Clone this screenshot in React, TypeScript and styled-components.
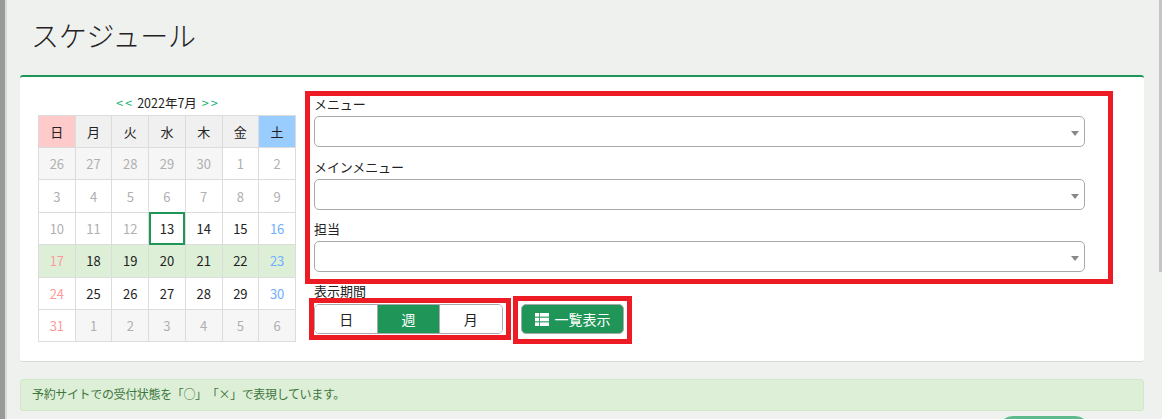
import styled, { createGlobalStyle } from "styled-components";

const weekDays = ["日", "月", "火", "水", "木", "金", "土"];

type Tone = "other" | "sun" | "sat" | "past" | "normal";

const weeks: number[][] = [
  [26, 27, 28, 29, 30, 1, 2],
  [3, 4, 5, 6, 7, 8, 9],
  [10, 11, 12, 13, 14, 15, 16],
  [17, 18, 19, 20, 21, 22, 23],
  [24, 25, 26, 27, 28, 29, 30],
  [31, 1, 2, 3, 4, 5, 6],
];

const toneOf = (row: number, col: number): Tone => {
  if ((row === 0 && col < 5) || (row === 5 && col > 0)) return "other";
  if (row === 0 || row === 1 || (row === 2 && col < 3)) return "past";
  if (col === 0) return "sun";
  if (col === 6) return "sat";
  return "normal";
};

const toneColor: Record<Tone, string> = {
  other: "#b0b0b0",
  past: "#b0b0b0",
  sun: "#ff9a9a",
  sat: "#70aeff",
  normal: "#222222",
};

const selects = ["メニュー", "メインメニュー", "担当"];

export default function App() {
  return (
    <>
      <GlobalStyle />
      <Page>
        <EdgeStrip />
        <Main>
          <Title>スケジュール</Title>
          <Card>
            <CalendarColumn>
              <MonthNav>
                <NavLink>&lt;&lt;</NavLink>
                <span>2022年7月</span>
                <NavLink>&gt;&gt;</NavLink>
              </MonthNav>
              <CalendarTable>
                <thead>
                  <tr>
                    {weekDays.map((day, index) => (
                      <HeadCell key={day} $index={index}>
                        {day}
                      </HeadCell>
                    ))}
                  </tr>
                </thead>
                <tbody>
                  {weeks.map((week, row) => (
                    <tr key={row}>
                      {week.map((date, col) => {
                        const tone = toneOf(row, col);
                        return (
                          <DayCell
                            key={col}
                            $tone={tone}
                            $inWeek={row === 3}
                            $today={row === 2 && col === 3}
                          >
                            {date}
                          </DayCell>
                        );
                      })}
                    </tr>
                  ))}
                </tbody>
              </CalendarTable>
            </CalendarColumn>
            <FormColumn>
              <FilterBox>
                {selects.map((label) => (
                  <Field key={label}>
                    <FieldLabel>{label}</FieldLabel>
                    <SelectBox>
                      <Caret />
                    </SelectBox>
                  </Field>
                ))}
              </FilterBox>
              <ActionRow>
                <PeriodColumn>
                  <PeriodLabel>表示期間</PeriodLabel>
                  <PeriodBox>
                    <Segment>
                      <SegmentItem>日</SegmentItem>
                      <SegmentItem $active>週</SegmentItem>
                      <SegmentItem>月</SegmentItem>
                    </Segment>
                  </PeriodBox>
                </PeriodColumn>
                <ListBox>
                  <ListButton>
                    <svg width="14" height="13" viewBox="0 0 14 13" fill="#fff">
                      <rect x="0" y="0" width="4.2" height="3.6" />
                      <rect x="5" y="0" width="9" height="3.6" />
                      <rect x="0" y="4.7" width="4.2" height="3.6" />
                      <rect x="5" y="4.7" width="9" height="3.6" />
                      <rect x="0" y="9.4" width="4.2" height="3.6" />
                      <rect x="5" y="9.4" width="9" height="3.6" />
                    </svg>
                    一覧表示
                  </ListButton>
                </ListBox>
              </ActionRow>
            </FormColumn>
          </Card>
          <Notice>予約サイトでの受付状態を「○」「×」で表現しています。</Notice>
          <PillRow>
            <Pill />
          </PillRow>
        </Main>
        <ScrollStrip />
      </Page>
    </>
  );
}

const GlobalStyle = createGlobalStyle`
  html, body {
    margin: 0;
    height: 419px;
    overflow: hidden;
    background: #eff1ef;
  }
  body {
    font-family: "Noto Sans CJK JP", "Noto Sans", sans-serif;
    font-size: 13px;
    color: #222;
  }
`;

const Page = styled.div`
  display: flex;
  height: 419px;
  overflow: hidden;
`;

const EdgeStrip = styled.div`
  width: 5px;
  flex: none;
  background: #999;
  border-right: 2px solid #dcdcdc;
`;

const Main = styled.main`
  flex: 1;
  min-width: 0;
  padding-left: 13px;
  padding-right: 15px;
`;

const ScrollStrip = styled.div`
  width: 3px;
  height: 272px;
  flex: none;
  background: #c4c4c4;
`;

const Title = styled.h1`
  margin: 0;
  height: 75px;
  padding: 13px 0 0 11px;
  box-sizing: border-box;
  font-size: 28px;
  font-weight: 300;
  line-height: 45px;
  letter-spacing: -0.2px;
  color: #222;
`;

const Card = styled.section`
  display: flex;
  gap: 9px;
  height: 287px;
  box-sizing: border-box;
  padding: 14px 0 0 18px;
  background: #fff;
  border-top: 2px solid #1f9558;
  border-bottom: 1px solid #d8d8d8;
  border-radius: 3px;
`;

const CalendarColumn = styled.div`
  width: 258px;
  flex: none;
`;

const MonthNav = styled.div`
  display: flex;
  justify-content: center;
  gap: 5px;
  height: 24px;
  font-size: 12.5px;
  line-height: 24px;
`;

const NavLink = styled.span`
  color: #1cb070;
  letter-spacing: 2px;
  margin-right: -2px;
`;

const CalendarTable = styled.table`
  width: 258px;
  border-collapse: collapse;
  table-layout: fixed;
`;

const headBackground = (index: number) =>
  index === 0 ? "#ffcaca" : index === 6 ? "#99ccff" : "#f0f0f0";

const HeadCell = styled.th<{ $index: number }>`
  height: 31px;
  padding: 0;
  border: 1px solid #dcdcdc;
  font-size: 13px;
  font-weight: 400;
  text-align: center;
  background: ${(p) => headBackground(p.$index)};
`;

const DayCell = styled.td<{ $tone: Tone; $inWeek: boolean; $today: boolean }>`
  height: 31.4px;
  padding: 0;
  border: 1px solid #dcdcdc;
  font-size: 13px;
  text-align: center;
  color: ${(p) => toneColor[p.$tone]};
  background: ${(p) =>
    p.$inWeek ? "#deefd8" : p.$tone === "other" ? "#f6f6f6" : "#fff"};
  ${(p) => p.$today && "outline: 2px solid #1f9558; outline-offset: -2px;"}
`;

const FormColumn = styled.div`
  width: 808px;
  flex: none;
`;

const FilterBox = styled.div`
  height: 193px;
  box-sizing: border-box;
  border: 5px solid #ed1c24;
  padding: 0 23px 0 4px;
`;

const Field = styled.div`
  height: 62.5px;
`;

const FieldLabel = styled.div`
  height: 20px;
  font-size: 13px;
  line-height: 16px;
  letter-spacing: -0.1px;
`;

const SelectBox = styled.div`
  position: relative;
  height: 31px;
  box-sizing: border-box;
  background: #fff;
  border: 1px solid #aaa;
  border-radius: 5px;
`;

const Caret = styled.span`
  position: absolute;
  right: 5px;
  top: 14px;
  border-top: 5px solid #888;
  border-left: 4px solid transparent;
  border-right: 4px solid transparent;
`;

const ActionRow = styled.div`
  display: flex;
  align-items: flex-start;
`;

const PeriodColumn = styled.div`
  margin-left: 4px;
`;

const PeriodLabel = styled.div`
  height: 14px;
  padding-left: 5px;
  font-size: 13px;
  line-height: 14px;
`;

const PeriodBox = styled.div`
  width: 202px;
  height: 42px;
  box-sizing: border-box;
  border: 5px solid #ed1c24;
  padding: 1px 0 0;
`;

const Segment = styled.div`
  display: flex;
  width: 189px;
  height: 30px;
  box-sizing: border-box;
  border: 1px solid #aaa;
  border-radius: 5px;
  overflow: hidden;
`;

const SegmentItem = styled.div<{ $active?: boolean }>`
  flex: 1;
  display: flex;
  align-items: center;
  justify-content: center;
  font-size: 14px;
  color: ${(p) => (p.$active ? "#fff" : "#222")};
  background: ${(p) => (p.$active ? "#1f9558" : "#fff")};
  ${(p) => p.$active && "box-shadow: inset 1px 0 0 #aaa, inset -1px 0 0 #aaa;"}
`;

const ListBox = styled.div`
  width: 119px;
  height: 48px;
  margin: 12px 0 0 2px;
  box-sizing: border-box;
  border: 5px solid #ed1c24;
  padding: 3px 3px 0;
`;

const ListButton = styled.div`
  display: flex;
  align-items: center;
  justify-content: center;
  gap: 6px;
  height: 30px;
  box-sizing: border-box;
  border: 1px solid #aaa;
  border-radius: 5px;
  background: #1f9558;
  color: #fff;
  font-size: 14px;
`;

const Notice = styled.div`
  height: 32px;
  margin-top: 17px;
  box-sizing: border-box;
  padding-left: 11px;
  border: 1px solid #d0e8c8;
  border-radius: 3px;
  background: #deefd8;
  color: #3c763d;
  font-size: 12px;
  line-height: 28px;
  letter-spacing: -0.35px;
  text-spacing-trim: space-all;
`;

const PillRow = styled.div`
  display: flex;
  padding: 5px 0 0 978px;
`;

const Pill = styled.div`
  width: 92px;
  height: 30px;
  flex: none;
  border-radius: 15px;
  background: #5cba8b;
`;
